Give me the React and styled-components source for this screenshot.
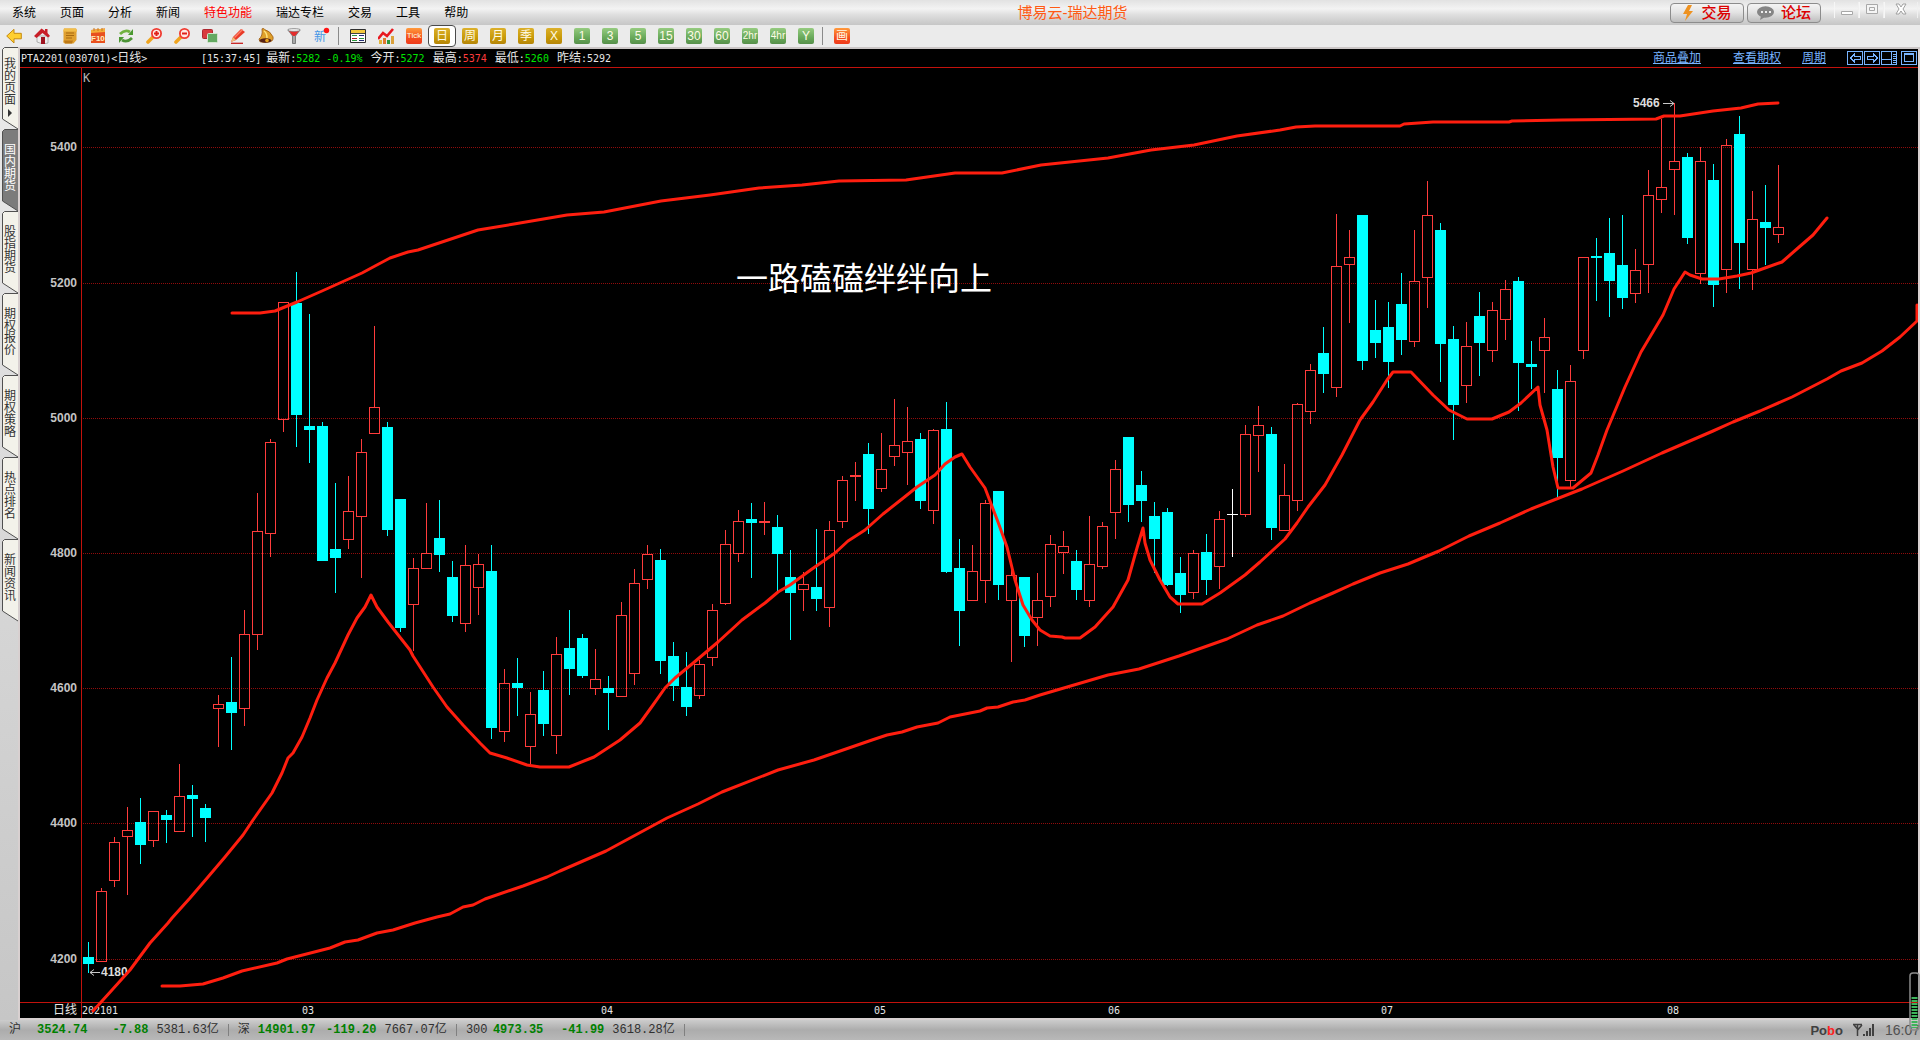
import React, { useState } from "react";
import styled, { createGlobalStyle } from "styled-components";

const GlobalStyle = createGlobalStyle`
  * {
    box-sizing: border-box;
  }

  body {
    margin: 0;
    overflow: hidden;
    background: #d0d0d0;
    font-family: "Liberation Sans", "Noto Sans CJK SC", sans-serif;
    font-size: 12px;
  }

  button {
    padding: 0;
    border: none;
    background: none;
    font-family: inherit;
    font-size: inherit;
    cursor: pointer;
  }
`;

const Page = styled.div`
  display: flex;
  flex-direction: column;
  height: 100vh;
`;

const MenuBar = styled.header`
  display: grid;
  grid-template-columns: 53% auto 1fr;
  align-items: center;
  height: 25px;
  flex-shrink: 0;
  background: linear-gradient(#e2e2e2, #f3f3f3 35%, #dedede 60%, #c6c6c6);
`;

const Menu = styled.nav`
  display: flex;
  gap: 24px;
  padding-left: 12px;
`;

const MenuItem = styled.button`
  line-height: 24px;
  color: ${({ $hot }) => ($hot ? "#ff0000" : "#000")};
  white-space: nowrap;
`;

const Title = styled.h1`
  margin: 0;
  font-size: 15px;
  font-weight: 400;
  line-height: 24px;
  color: #ff5a14;
`;

const MenuRight = styled.div`
  display: flex;
  justify-content: flex-end;
  gap: 3px;
  padding-right: 2px;
`;

const PillButton = styled.button`
  display: flex;
  align-items: center;
  justify-content: center;
  gap: 7px;
  width: 74px;
  height: 20px;
  margin-top: 1px;
  border: 1px solid #8c8c8c;
  border-radius: 4px;
  background: linear-gradient(#f4f4f4, #e4e4e4 45%, #bdbdbd);
  font-size: 15px;
  font-weight: 500;
  line-height: 18px;
  color: #dc0000;
`;

const WindowButtons = styled.div`
  display: flex;
  align-items: flex-start;
  margin-left: 10px;
`;

const WindowButton = styled.button`
  width: ${({ $wide }) => ($wide ? 34 : 25)}px;
  height: 16px;
  border-left: 1px solid #f6f6f6;
  border-right: 1px solid #f0f0f0;
`;

const Toolbar = styled.div`
  display: flex;
  align-items: center;
  height: 24px;
  flex-shrink: 0;
  border-bottom: 2px solid #cbc6c6;
  background: #ebebeb;
`;

const ToolButton = styled.button`
  display: flex;
  align-items: center;
  justify-content: center;
  width: 28px;
  height: 22px;
`;

const BadgeFrame = styled(ToolButton)`
  border: ${({ $active }) => ($active ? "1px solid #4a4a4a" : "none")};
  border-radius: 4px;
  background: ${({ $active }) => ($active ? "#fff" : "none")};
`;

const badgeColors = {
  gold: "linear-gradient(#dcb02c, #c89a08 60%, #b58408)",
  green: "linear-gradient(#96cb80, #68a95a 60%, #568f4a)",
  orange: "linear-gradient(#ff9a3c, #f4501e 60%, #ee3a1c)",
};

const badgeSizes = { 1: 12, 2: 12, 3: 10, 4: 8 };

const Badge = styled.span`
  width: 16px;
  height: 16px;
  border-radius: 2px;
  background: ${({ $tone }) => badgeColors[$tone]};
  font-size: ${({ $chars }) => badgeSizes[$chars]}px;
  line-height: 16px;
  text-align: center;
  color: #fffbe6;
`;

const ToolDivider = styled.div`
  width: 8px;
  height: 18px;
  background: linear-gradient(#8a8a8a, #8a8a8a) 2px 0 / 1px 100% no-repeat;
`;

const Body = styled.div`
  display: flex;
  flex: 1;
  min-height: 0;
`;

const SideBar = styled.nav`
  width: 20px;
  margin-top: -2px;
  flex-shrink: 0;
  border-right: 2px solid #d8d0d0;
  background: linear-gradient(#ebebeb, #c6c6c6);
`;

const SideTab = styled.button`
  position: relative;
  display: block;
  width: 16px;
  height: 82px;
  margin-left: 2px;
`;

const SideShape = styled.svg`
  position: absolute;
  top: 0;
  left: 0;
`;

const SideLabel = styled.span`
  position: relative;
  display: block;
  width: 12px;
  margin: 0 auto;
  padding-bottom: 4px;
  font-size: 12px;
  line-height: 12px;
  word-break: break-all;
  color: ${({ $active }) => ($active ? "#fff" : "#333")};
`;

const TabArrow = styled.svg`
  display: block;
  overflow: visible;
`;

const ChartPane = styled.main`
  display: flex;
  flex-direction: column;
  flex: 1;
  min-width: 0;
  border-right: 2px solid #d8d0d0;
  border-bottom: 2px solid #d8d0d0;
  background: #000;
`;

const QuoteBar = styled.div`
  display: flex;
  align-items: center;
  height: 19px;
  flex-shrink: 0;
  padding-left: 1px;
  border-bottom: 1px solid #c3120c;
  line-height: 18px;
  color: #e6e6e6;
  white-space: nowrap;
`;

const Mono = styled.span`
  font-family: "DejaVu Sans Mono", monospace;
  font-size: 10px;
  color: ${({ $color }) => $color || "inherit"};
`;

const Symbol = styled.div`
  width: 180px;
`;

const QuoteTime = styled.div`
  margin-right: 5px;
`;

const QuoteItem = styled.div`
  margin-right: 8px;
`;

const QuoteLinks = styled.div`
  display: flex;
  align-items: center;
  margin-left: auto;
`;

const QuoteLink = styled.a`
  margin-right: ${({ $wide }) => ($wide ? 32 : 21)}px;
  color: #78b4ff;
  text-decoration: underline;
`;

const PaneButton = styled.button`
  width: 17px;
  height: 14px;
  margin-left: ${({ $apart }) => ($apart ? 3 : 0)}px;
  line-height: 0;
`;

const Chart = styled.svg`
  display: block;
  width: 100%;
  flex: 1 1 0;
  min-height: 0;
`;

const StatusBar = styled.footer`
  display: flex;
  align-items: center;
  position: relative;
  height: 20px;
  flex-shrink: 0;
  padding-left: 9px;
  background: linear-gradient(#cccccc, #acacac 50%, #b8b8b8);
  color: #303030;
  white-space: nowrap;
`;

const IndexGroup = styled.div`
  display: flex;
  align-items: center;
  font-family: "Liberation Mono", "Noto Sans CJK SC", monospace;
  margin-right: 9px;
  padding-right: 9px;
  border-right: 1px solid #808080;
  line-height: 12px;
`;

const IndexName = styled.span`
  width: ${({ $w }) => $w}px;
`;

const IndexValue = styled.b`
  color: #008000;
`;

const IndexChange = styled(IndexValue)`
  width: 61px;
  margin-right: 8px;
  text-align: right;
`;

const StatusRight = styled.div`
  display: flex;
  align-items: center;
  margin-left: auto;
`;

const Brand = styled.b`
  margin-right: 9px;
  font-size: 13px;
  color: #404040;

  em {
    font-style: normal;
    color: #ff2020;
  }
`;

const Clock = styled.span`
  margin-left: 10px;
  font-size: 14px;
  color: #505050;
`;

const Meter = styled.svg`
  position: absolute;
  right: 0;
  bottom: 9px;
`;

const menus = ["系统", "页面", "分析", "新闻", "特色功能", "瑞达专栏", "交易", "工具", "帮助"];

const sideTabs = ["我的页面", "国内期货", "股指期货", "期权报价", "期权策略", "热点排名", "新闻资讯"];

const periods = [
  ["Tick", "orange"],
  ["日", "gold"],
  ["周", "gold"],
  ["月", "gold"],
  ["季", "gold"],
  ["X", "gold"],
  ["1", "green"],
  ["3", "green"],
  ["5", "green"],
  ["15", "green"],
  ["30", "green"],
  ["60", "green"],
  ["2hr", "green"],
  ["4hr", "green"],
  ["Y", "green"],
];

const quotes = [
  ["最新", "5282 -0.19%", "#00e600"],
  ["今开", "5272", "#00e600"],
  ["最高", "5374", "#ff3c3c"],
  ["最低", "5260", "#00e600"],
  ["昨结", "5292", "#e6e6e6"],
];

const indexes = [
  { name: "沪", nameW: 28, value: "3524.74", change: "-7.88", amount: "5381.63亿" },
  { name: "深", nameW: 20, value: "14901.97", change: "-119.20", amount: "7667.07亿" },
  { name: "300", nameW: 27, value: "4973.35", change: "-41.99", amount: "3618.28亿" },
];

// [direction, high, body top, body bottom, low]
const candles = [
  ["d", 942, 957, 964, 973], ["u", 888, 891, 962, 962], ["u", 837, 842, 881, 887],
  ["u", 807, 830, 837, 895], ["d", 798, 822, 845, 864], ["u", 811, 811, 841, 847],
  ["d", 810, 815, 820, 843], ["u", 764, 796, 832, 832], ["d", 785, 795, 799, 837],
  ["d", 804, 808, 818, 842], ["u", 695, 704, 709, 747], ["d", 657, 702, 713, 750],
  ["u", 610, 634, 709, 726], ["u", 493, 531, 635, 650], ["u", 439, 442, 534, 557],
  ["u", 302, 302, 420, 432], ["d", 272, 303, 415, 447], ["d", 314, 426, 430, 463],
  ["d", 422, 426, 561, 561], ["d", 483, 549, 558, 593], ["u", 476, 511, 540, 549],
  ["u", 439, 452, 517, 578], ["u", 326, 407, 434, 434], ["d", 422, 427, 530, 536],
  ["d", 499, 499, 628, 632], ["u", 558, 568, 605, 651], ["u", 503, 553, 569, 569],
  ["d", 500, 538, 555, 572], ["d", 561, 577, 616, 622], ["u", 545, 565, 624, 632],
  ["u", 554, 564, 588, 615], ["d", 545, 571, 728, 739], ["u", 669, 683, 732, 742],
  ["d", 658, 683, 688, 716], ["u", 692, 714, 747, 764], ["d", 671, 690, 724, 736],
  ["u", 637, 654, 736, 754], ["d", 610, 648, 669, 695], ["d", 634, 638, 676, 678],
  ["u", 649, 679, 689, 695], ["d", 676, 688, 693, 730], ["u", 602, 615, 697, 697],
  ["u", 569, 583, 674, 685], ["u", 545, 554, 580, 589], ["d", 549, 560, 661, 674],
  ["d", 642, 656, 686, 701], ["d", 652, 687, 707, 716], ["u", 660, 664, 696, 699],
  ["u", 604, 610, 658, 666], ["u", 530, 544, 604, 605], ["u", 510, 521, 554, 562],
  ["d", 503, 519, 523, 578], ["u", 502, 521, 523, 535], ["d", 515, 527, 554, 592],
  ["d", 550, 577, 593, 640], ["u", 572, 584, 590, 611], ["d", 529, 587, 599, 611],
  ["u", 521, 530, 608, 627], ["u", 476, 480, 522, 528], ["u", 462, 475, 477, 501],
  ["d", 443, 454, 509, 534], ["u", 433, 469, 489, 492], ["u", 399, 445, 457, 466],
  ["u", 407, 441, 453, 485], ["d", 433, 439, 501, 509], ["u", 429, 430, 511, 524],
  ["d", 402, 429, 572, 573], ["d", 539, 568, 611, 646], ["u", 545, 571, 601, 601],
  ["u", 500, 503, 581, 603], ["d", 491, 491, 585, 600], ["u", 567, 575, 601, 662],
  ["d", 577, 577, 636, 647], ["u", 573, 600, 618, 646], ["u", 535, 544, 597, 607],
  ["u", 531, 546, 553, 574], ["d", 550, 561, 590, 600], ["u", 516, 564, 601, 607],
  ["u", 522, 526, 567, 569], ["u", 460, 469, 513, 539], ["d", 437, 437, 505, 522],
  ["d", 471, 485, 501, 522], ["d", 502, 516, 539, 573], ["d", 508, 512, 585, 586],
  ["d", 557, 573, 595, 613], ["u", 550, 553, 593, 599], ["d", 534, 552, 580, 595],
  ["u", 511, 519, 567, 589], ["x", 489, 514, 515, 557], ["u", 425, 434, 515, 517],
  ["u", 406, 425, 436, 472], ["d", 427, 434, 528, 540], ["u", 464, 495, 531, 531],
  ["u", 403, 404, 501, 511], ["u", 364, 370, 412, 424], ["d", 327, 353, 374, 393],
  ["u", 214, 266, 388, 397], ["u", 230, 257, 265, 323], ["d", 215, 215, 361, 370],
  ["d", 300, 330, 343, 358], ["d", 302, 327, 362, 388], ["d", 273, 304, 340, 355],
  ["u", 230, 281, 342, 347], ["u", 181, 215, 278, 308], ["d", 223, 230, 344, 382],
  ["d", 326, 339, 405, 440], ["u", 322, 346, 386, 403], ["d", 292, 316, 343, 376],
  ["u", 302, 310, 351, 362], ["u", 280, 289, 320, 340], ["d", 277, 281, 363, 411],
  ["d", 341, 364, 367, 389], ["u", 318, 337, 351, 393], ["d", 370, 389, 458, 499],
  ["u", 365, 381, 481, 488], ["u", 257, 257, 351, 359], ["d", 238, 256, 258, 301],
  ["d", 218, 253, 281, 317], ["d", 215, 265, 298, 309], ["u", 249, 270, 294, 303],
  ["u", 170, 195, 265, 293], ["u", 119, 187, 200, 213], ["u", 103, 161, 170, 215],
  ["d", 153, 157, 238, 244], ["u", 147, 161, 274, 284], ["d", 164, 180, 285, 307],
  ["u", 139, 145, 270, 293], ["d", 116, 134, 243, 289], ["u", 191, 219, 270, 290],
  ["d", 185, 222, 228, 265], ["u", 165, 227, 235, 243],
];

const priceLines = [
  [5400, 147], [5200, 283], [5000, 418], [4800, 553], [4600, 688], [4400, 823], [4200, 959],
];

const months = [["03", 302], ["04", 601], ["05", 874], ["06", 1108], ["07", 1381], ["08", 1667]];

const upperLine =
  "232,313 260,313 275,311 297,302 322,291 362,273 375,266 390,258 408,252 418,250 478,230 514,224 567,215 604,212 661,201 710,195 759,188 802,185 839,181 906,180 955,173 1002,173 1041,165 1108,158 1151,150 1194,145 1237,136 1280,130 1296,127 1315,126 1400,126 1404,124 1433,122 1509,122 1512,121 1562,120 1656,119 1664,116 1680,116 1713,111 1741,108 1758,104 1778,103";

const waveLine =
  "93,1011 112,990 130,970 150,943 168,923 172,918 190,898 208,877 225,857 243,835 253,820 272,793 282,773 288,758 293,753 302,737 310,718 317,700 327,678 335,663 342,648 348,635 357,618 365,607 371,595 377,607 388,622 410,650 413,656 433,687 447,707 463,725 480,743 490,753 507,758 527,765 540,767 569,767 594,757 620,740 640,723 653,705 665,688 675,678 692,664 718,642 742,620 765,603 778,592 790,585 812,569 835,553 848,541 865,530 883,514 902,499 917,487 935,475 945,464 955,457 962,454 970,467 985,488 998,522 1007,547 1015,580 1023,605 1032,620 1040,630 1050,636 1062,637 1065,638 1080,638 1095,627 1113,607 1128,580 1137,548 1143,528 1145,543 1150,560 1160,580 1170,597 1178,604 1202,604 1220,593 1245,575 1260,562 1285,539 1297,523 1308,507 1325,485 1342,455 1360,420 1373,402 1387,380 1393,372 1411,372 1433,395 1449,410 1467,419 1492,419 1509,412 1521,403 1538,387 1540,405 1547,430 1553,467 1558,488 1573,488 1591,473 1598,455 1607,430 1625,387 1641,352 1663,315 1674,289 1685,272 1690,275 1702,279 1719,279 1737,276 1751,273 1782,262 1798,248 1813,235 1827,218";

const lowerLine =
  "162,986 180,986 203,984 223,978 242,971 277,963 287,959 330,948 345,942 358,940 377,933 393,930 415,923 437,917 450,914 463,907 473,905 485,899 523,886 547,877 560,871 606,851 667,818 698,804 722,792 778,770 814,760 872,740 887,735 902,732 917,727 938,723 950,717 980,711 987,708 998,707 1013,702 1025,700 1040,695 1108,675 1139,669 1179,656 1227,639 1257,625 1283,616 1310,603 1333,593 1353,584 1380,573 1408,564 1439,551 1469,536 1500,523 1531,509 1582,489 1623,471 1662,453 1713,431 1733,422 1760,411 1792,397 1827,379 1841,371 1862,363 1882,351 1900,337 1917,321 1917,305";

const RED = "#ff3c3c";
const CYAN = "#00ffff";

function Candle({ x, data }) {
  const [dir, high, top, bottom, low] = data;
  if (dir === "u") {
    return (
      <g fill={RED}>
        <rect x={x} y={high} width="1" height={top - high} />
        <rect x={x} y={bottom} width="1" height={low - bottom} />
        <rect x={x - 4.5} y={top + 0.5} width="10" height={bottom - top - 1} fill="none" stroke={RED} />
      </g>
    );
  }
  return (
    <g fill={dir === "x" ? "#fff" : CYAN}>
      <rect x={x} y={high} width="1" height={low - high} />
      <rect x={x - 5} y={top} width="11" height={bottom - top} />
    </g>
  );
}

function KLineChart() {
  return (
    <Chart viewBox="20 68 1898 950" preserveAspectRatio="none" role="img" aria-label="K">
      <g shapeRendering="crispEdges">
        {priceLines.map(([price, y]) => (
          <line key={price} x1="83" x2="1918" y1={y + 0.5} y2={y + 0.5} stroke="#900c0c" strokeDasharray="1 1" />
        ))}
        <rect x="81" y="68" width="1" height="950" fill="#c3120c" />
        <rect x="20" y="1002" width="1898" height="1" fill="#c3120c" />
        {candles.map((c, i) => (
          <Candle key={i} x={88 + i * 13} data={c} />
        ))}
      </g>
      <g fontFamily="Liberation Sans" fontSize="12" fontWeight="700" fill="#c4c4c4" textAnchor="end">
        {priceLines.map(([price, y]) => (
          <text key={price} x="77" y={y + 4}>{price}</text>
        ))}
      </g>
      <g fontFamily="DejaVu Sans Mono" fontSize="10" fill="#e6e6e6">
        <text x="83" y="82" fontSize="12" fill="#b4b4b4">K</text>
        <text x="82" y="1014">202101</text>
        {months.map(([m, x]) => (
          <text key={m} x={x} y="1014">{m}</text>
        ))}
      </g>
      <text x="53" y="1014" fontFamily="Noto Sans CJK SC" fontSize="12" fill="#e6e6e6">日线</text>
      <g fontFamily="Liberation Sans" fontSize="12" fontWeight="700" fill="#dcdcdc">
        <text x="1633" y="107">5466</text>
        <text x="101" y="976">4180</text>
      </g>
      <path d="M1663 103.5h11M1670 100.5l4 3-4 3M90 972.5h10M94 969.5l-4 3 4 3" fill="none" stroke="#c8c8c8" />
      <text x="736" y="290" fontFamily="Noto Sans CJK SC" fontSize="32" fill="#fff">一路磕磕绊绊向上</text>
      <g fill="none" stroke="#ff1e0f" strokeWidth="3" strokeLinecap="round" strokeLinejoin="round">
        <polyline points={upperLine} />
        <polyline points={waveLine} />
        <polyline points={lowerLine} />
      </g>
    </Chart>
  );
}

const Icon = ({ children }) => (
  <svg width="16" height="16" viewBox="0 0 16 16">{children}</svg>
);

function Magnifier({ plus }) {
  return (
    <Icon>
      <path d="M2 14L6.500 9.500" stroke="#f0a41e" strokeWidth="3.6" strokeLinecap="round" />
      <circle cx="10.5" cy="5.5" r="4.6" fill="#ffe9e4" stroke="#f03c32" strokeWidth="1.8" />
      <path d={plus ? "M8 5.5h5M10.5 3v5" : "M8 5.5h5"} stroke="#e02018" strokeWidth="2" />
    </Icon>
  );
}

const tools = [
  ["后退", <Icon><path d="M.7 8L8 1.3v4h7.3v5.5H8V15z" fill="#ffcf30" stroke="#c58a10" /></Icon>],
  [
    "首页",
    <Icon>
      <path d="M3 8h11v7l-5 1-6-2z" fill="#eee" stroke="#888" strokeWidth=".6" />
      <path d="M0 8l7.5-7.5L11 3V1h2.5v4L16 8l-2 1.5L8.5 5 2.5 10z" fill="#c81e28" />
      <path d="M7 9h4v7H7z" fill="#a01420" />
    </Icon>,
  ],
  [
    "公告",
    <Icon>
      <path d="M2 .5h12q1.5 1 .5 4V12l-3 3.5H3Q.5 15 1.5 12V3z" fill="#e0a030" />
      <path d="M2 .5h12l1 3H1z" fill="#f2be4a" />
      <path d="M4 5h8M4 7.5h8M4 10h6" stroke="#a86a10" />
      <path d="M2 12.5h9l-1 3H3z" fill="#bd7816" />
    </Icon>,
  ],
  [
    "F10",
    <Icon>
      <path d="M1 2l14-1.5V15H1z" fill="#e8501e" />
      <path d="M1 2l14-1.5V4L1 5z" fill="#f5ad38" />
      <path d="M4 0v3M8 0v3M12 0v3" stroke="#c67b1e" />
      <text x="1" y="12.5" fontFamily="Liberation Sans" fontSize="8" fontWeight="700" fill="#fff0c0">F10</text>
    </Icon>,
  ],
  [
    "刷新",
    <Icon>
      <path d="M2 6q5-5 10-2" fill="none" stroke="#70b240" strokeWidth="2.8" />
      <path d="M10 7h5V1z" fill="#4a9830" />
      <path d="M14 10q-5 5-10 2" fill="none" stroke="#4c9436" strokeWidth="2.8" />
      <path d="M6 9H1v6z" fill="#4a9830" />
    </Icon>,
  ],
  ["放大", <Magnifier plus />],
  ["缩小", <Magnifier />],
  [
    "叠加",
    <Icon>
      <rect x=".5" y="1.5" width="10" height="9" rx="1" fill="#d83a3e" stroke="#ad2830" />
      <rect x="5.5" y="5.5" width="10" height="9" rx="1" fill="#64a962" stroke="#d3e5cf" />
    </Icon>,
  ],
  [
    "画线",
    <Icon>
      <path d="M1 14l2-5 8-8 4 3-9 8z" fill="#e83a28" />
      <path d="M4 9l8-8 1 1-8 8z" fill="#ff8066" />
      <path d="M1 14l2-5 3 3z" fill="#f0bd78" />
      <path d="M1 15.3h12" stroke="#c92020" strokeWidth="1.3" />
    </Icon>,
  ],
  [
    "预警",
    <Icon>
      <path d="M4 .8q2-1 3 1 5 1 8 7 .8 4-3 5-5 1.5-10 0L1 11q4-3 3-10z" fill="#dfa02b" stroke="#9a5810" strokeWidth=".8" />
      <path d="M6 3q3 2 3 7" fill="none" stroke="#ffe17c" strokeWidth="1.5" />
      <ellipse cx="7.5" cy="12.5" rx="6" ry="2.2" fill="#572216" />
      <circle cx="9" cy="12.5" r="1.8" fill="#e8a31e" />
    </Icon>,
  ],
  [
    "过滤",
    <Icon>
      <path d="M2 2l4.5 6v7.5h3V8L14 2z" fill="#a8a8a8" stroke="#686868" strokeWidth=".8" />
      <path d="M3 3h10L9 8H7z" fill="#e42c2c" />
      <ellipse cx="8" cy="2" rx="6.5" ry="1.4" fill="#eee" stroke="#777" strokeWidth=".7" />
    </Icon>,
  ],
  [
    "新",
    <svg width="18" height="18" viewBox="0 0 18 18">
      <text x="1" y="14" fontFamily="Noto Sans CJK SC" fontSize="12" fill="#4696e6">新</text>
      <circle cx="13.5" cy="3.5" r="2.7" fill="#ff1414" />
    </svg>,
  ],
];

const chartTools = [
  [
    "报价表",
    <Icon>
      <path d="M.5 1.5h15v13H.5z" fill="#fff" stroke="#303030" />
      <path d="M1 2h14v3H1z" fill="#f3c93c" />
      <path d="M1 5.5h14" stroke="#444" />
      <path d="M2 7.5h5M2 12.5h5M9 10.500h5" stroke="#2c9a3c" />
      <path d="M9 7.5h5M9 12.5h5" stroke="#222a74" />
      <path d="M2 10.500h5" stroke="#b02020" />
    </Icon>,
  ],
  [
    "走势",
    <Icon>
      <path d="M1 12h3v4H1z" fill="#e3b63c" />
      <path d="M5 10h3v6H5z" fill="#e07830" />
      <path d="M9 12h3v4H9z" fill="#2d963b" />
      <path d="M13 8h3v8h-3z" fill="#dba13c" />
      <path d="M0 11l5-6 4 3 6-7" fill="none" stroke="#e81820" strokeWidth="2.6" />
    </Icon>,
  ],
];

function PeriodButton({ label, tone, active, onClick }) {
  return (
    <BadgeFrame $active={active} aria-pressed={active} onClick={onClick}>
      <Badge $tone={tone} $chars={label.length}>{label}</Badge>
    </BadgeFrame>
  );
}

const paneIcons = [
  ["向左", "M3.5 7l4-4v2.5h6v3h-6V11z"],
  ["向右", "M13.5 7l-4-4v2.5h-6v3h6V11z"],
  ["分栏", "M1 8.5h9.5M10.5 1v12M12 3.5h3M12 5.5h3M12 7.5h3M12 9.5h3M12 11.5h3"],
  ["最大化", "M3.5 2.5h9v8h-9zM3.5 3.5h9"],
];

export default function App() {
  const [period, setPeriod] = useState("日");
  const [tab, setTab] = useState("国内期货");

  return (
    <Page>
      <GlobalStyle />
      <MenuBar>
        <Menu>
          {menus.map((m) => (
            <MenuItem key={m} $hot={m === "特色功能"}>{m}</MenuItem>
          ))}
        </Menu>
        <Title>博易云-瑞达期货</Title>
        <MenuRight>
          <PillButton>
            <svg width="12" height="16" viewBox="0 0 12 16">
              <path d="M6 0h4L7 6h4L3 16l2-7H1z" fill="#ee9220" />
            </svg>
            交易
          </PillButton>
          <PillButton>
            <svg width="17" height="14" viewBox="0 0 17 14">
              <ellipse cx="8.5" cy="6" rx="8.5" ry="5.8" fill="#858585" />
              <path d="M4 10l-1 4 5-3z" fill="#858585" />
              <path d="M4 6h2M8 6h2M12 6h2" stroke="#eee" strokeWidth="2" />
            </svg>
            论坛
          </PillButton>
          <WindowButtons>
            <WindowButton aria-label="最小化">
              <svg width="14" height="12"><path d="M1.5 8.5h11v3h-11z" fill="#fff" stroke="#a8a8a8" /></svg>
            </WindowButton>
            <WindowButton aria-label="还原">
              <svg width="14" height="12">
                <path d="M1.5 1.5h11v9h-11zM4.5 4.5h5v3h-5z" fill="#f5f5f5" stroke="#a8a8a8" />
              </svg>
            </WindowButton>
            <WindowButton $wide aria-label="关闭">
              <svg width="12" height="12">
                <path d="M1 1h3l2 3 2-3h3L8 6l3 5H8L6 8l-2 3H1l3-5z" fill="#fff" stroke="#a0a0a0" />
              </svg>
            </WindowButton>
          </WindowButtons>
        </MenuRight>
      </MenuBar>

      <Toolbar>
        {tools.map(([name, icon]) => (
          <ToolButton key={name} aria-label={name}>{icon}</ToolButton>
        ))}
        <ToolDivider />
        {chartTools.map(([name, icon]) => (
          <ToolButton key={name} aria-label={name}>{icon}</ToolButton>
        ))}
        {periods.map(([label, tone]) => (
          <PeriodButton key={label} label={label} tone={tone} active={period === label} onClick={() => setPeriod(label)} />
        ))}
        <ToolDivider />
        <PeriodButton label="画" tone="orange" />
      </Toolbar>

      <Body>
        <SideBar>
          {sideTabs.map((t, i) => (
            <SideTab key={t} onClick={() => setTab(t)}>
              <SideShape width="16" height="83" viewBox="0 0 16 83">
                <path
                  d="M16 .5H2.5L.5 2.5V72L16 82"
                  fill={t === tab ? "#7c7c7c" : "#f3f2ea"}
                  stroke="#505050"
                />
              </SideShape>
              <SideLabel $active={t === tab}>
                {t}
                {i === 0 && (
                  <TabArrow width="12" height="9" viewBox="0 0 12 9">
                    <path d="M4 3v8l4-4z" fill="#333" />
                  </TabArrow>
                )}
              </SideLabel>
            </SideTab>
          ))}
        </SideBar>
        <ChartPane>
          <QuoteBar>
            <Symbol>
              <Mono>PTA2201(030701)&lt;</Mono>日线<Mono>&gt;</Mono>
            </Symbol>
            <QuoteTime><Mono>[15:37:45]</Mono></QuoteTime>
            {quotes.map(([label, value, color]) => (
              <QuoteItem key={label}>
                {label}
                <Mono>:</Mono>
                <Mono $color={color}>{value}</Mono>
              </QuoteItem>
            ))}
            <QuoteLinks>
              <QuoteLink href="#overlay" $wide>商品叠加</QuoteLink>
              <QuoteLink href="#options">查看期权</QuoteLink>
              <QuoteLink href="#period">周期</QuoteLink>
              {paneIcons.map(([name, d], i) => (
                <PaneButton key={name} $apart={i === 3} aria-label={name}>
                  <svg width="17" height="14" viewBox="0 0 17 14" fill="none" stroke="#78b4ff" shapeRendering="crispEdges">
                    <path d="M.5.5h15v13H.5z" />
                    <path d={d} />
                  </svg>
                </PaneButton>
              ))}
            </QuoteLinks>
          </QuoteBar>
          <KLineChart />
        </ChartPane>
      </Body>

      <StatusBar>
        {indexes.map((x) => (
          <IndexGroup key={x.name}>
            <IndexName $w={x.nameW}>{x.name}</IndexName>
            <IndexValue>{x.value}</IndexValue>
            <IndexChange>{x.change}</IndexChange>
            {x.amount}
          </IndexGroup>
        ))}
        <StatusRight>
          <Brand>Po<em>b</em>o</Brand>
          <svg width="23" height="14" viewBox="0 0 23 14">
            <path d="M1 1.5h9M2 2l4 4.5L10 2M5.5 2v11" fill="none" stroke="#404040" strokeWidth="1.5" />
            <path d="M11 11h2v2h-2zM14 8h2v5h-2zM17 5h2v8h-2zM20 1h2v12h-2z" fill="#404040" />
          </svg>
          <Clock>16:07</Clock>
        </StatusRight>
        <Meter width="11" height="59" viewBox="0 0 11 59">
          <rect x="1" y="1" width="9" height="57" rx="3" fill="none" stroke="#8c8c8c" strokeWidth="1.5" />
          <path d="M5.5 25v31" stroke="#3cb45a" strokeWidth="6" strokeDasharray="2 1" />
        </Meter>
      </StatusBar>
    </Page>
  );
}
